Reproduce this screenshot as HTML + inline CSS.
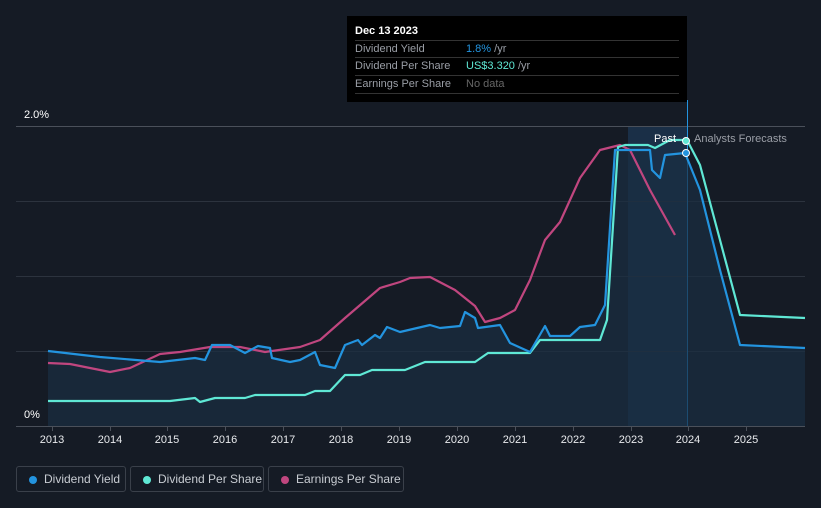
<!DOCTYPE html>
<html><head><style>
body{margin:0;width:821px;height:508px;background:#151b25;font-family:"Liberation Sans",sans-serif;overflow:hidden;position:relative}
.tt{position:absolute;left:347px;top:16px;width:340px;height:86px;background:#000;color:#fff;font-size:11px}
.tt .h{position:absolute;left:8px;top:9px;font-weight:bold}
.row{position:absolute;left:8px;width:324px;border-top:1px solid #333;height:17px;line-height:17px;color:#9a9ea6}
.row span{position:absolute;left:111px}
.leg{position:absolute;top:466px;height:26px;border:1px solid #3a404a;border-radius:3px;color:#c8ccd2;font-size:12px;line-height:24px;box-sizing:border-box;padding-left:27px;white-space:nowrap;overflow:hidden}
.leg i{position:absolute;left:12px;top:9px;width:8px;height:8px;border-radius:50%}
</style></head><body>
<svg width="821" height="508" style="position:absolute;left:0;top:0">
<rect x="628" y="126" width="59" height="300" fill="#1b3550" opacity="0.8"/>
<g stroke="#2c333e" stroke-width="1">
<line x1="16" y1="126.5" x2="805" y2="126.5" stroke="#4a505a"/>
<line x1="16" y1="201.5" x2="805" y2="201.5"/>
<line x1="16" y1="276.5" x2="805" y2="276.5"/>
<line x1="16" y1="351.5" x2="805" y2="351.5"/>
<line x1="16" y1="426.5" x2="805" y2="426.5" stroke="#4a505a"/>
</g>
<line x1="687.5" y1="100" x2="687.5" y2="426" stroke="#2394df" stroke-width="1"/>
<path d="M48,351 L100,357 L160,362 L195,358 L205,360 L212,345 L230,345 L245,353 L258,346 L270,348 L272,358 L290,362 L300,360 L315,352 L320,365 L335,368 L345,345 L358,340 L362,345 L375,335 L380,338 L387,327 L400,332 L430,325 L440,328 L460,326 L465,312 L475,318 L478,328 L500,325 L510,343 L530,352 L545,326 L550,336 L570,336 L580,327 L595,325 L605,305 L615,150 L650,150 L652,170 L660,178 L665,155 L685,153 L700,190 L720,270 L740,345 L805,348 L805,426 L48,426Z" fill="#1a2d42" opacity="0.7"/>
<path d="M48,363 L70,364 L110,372 L130,368 L160,354 L180,352 L210,347 L240,347 L265,352 L300,347 L320,340 L345,318 L380,288 L400,282 L410,278 L430,277 L455,290 L475,306 L485,322 L500,318 L515,310 L530,280 L545,240 L560,222 L580,178 L600,150 L620,145 L630,150 L650,190 L675,235" fill="none" stroke="#c0467f" stroke-width="2.2" stroke-linejoin="round"/>
<path d="M48,401 L170,401 L195,398 L200,402 L215,398 L245,398 L255,395 L305,395 L315,391 L330,391 L345,375 L360,375 L372,370 L405,370 L425,362 L475,362 L488,353 L530,353 L540,340 L600,340 L607,320 L618,147 L625,145 L648,145 L655,148 L670,140 L687,140 L700,165 L720,240 L740,315 L805,318" fill="none" stroke="#5fe8d5" stroke-width="2.2" stroke-linejoin="round"/>
<path d="M48,351 L100,357 L160,362 L195,358 L205,360 L212,345 L230,345 L245,353 L258,346 L270,348 L272,358 L290,362 L300,360 L315,352 L320,365 L335,368 L345,345 L358,340 L362,345 L375,335 L380,338 L387,327 L400,332 L430,325 L440,328 L460,326 L465,312 L475,318 L478,328 L500,325 L510,343 L530,352 L545,326 L550,336 L570,336 L580,327 L595,325 L605,305 L615,150 L650,150 L652,170 L660,178 L665,155 L685,153 L700,190 L720,270 L740,345 L805,348" fill="none" stroke="#2394df" stroke-width="2.2" stroke-linejoin="round"/>
<circle cx="686" cy="141" r="3.5" fill="#5fe8d5" stroke="#fff" stroke-width="1"/>
<circle cx="686" cy="153" r="3.5" fill="#2394df" stroke="#fff" stroke-width="1"/>
<g font-size="11" fill="#fff">
<text x="24" y="118">2.0%</text><text x="24" y="418">0%</text>
<text x="654" y="142">Past</text>
<text x="694" y="142" fill="#9a9ea6">Analysts Forecasts</text>
</g>
<g font-size="11" fill="#e8eaed" text-anchor="middle" stroke="none">
<text x="52" y="443">2013</text><text x="110" y="443">2014</text><text x="167" y="443">2015</text><text x="225" y="443">2016</text><text x="283" y="443">2017</text><text x="341" y="443">2018</text><text x="399" y="443">2019</text><text x="457" y="443">2020</text><text x="515" y="443">2021</text><text x="573" y="443">2022</text><text x="631" y="443">2023</text><text x="688" y="443">2024</text><text x="746" y="443">2025</text>
</g>
<g stroke="#4a505a">
<line x1="52.5" y1="426" x2="52.5" y2="431"/><line x1="110.5" y1="426" x2="110.5" y2="431"/><line x1="167.5" y1="426" x2="167.5" y2="431"/><line x1="225.5" y1="426" x2="225.5" y2="431"/><line x1="283.5" y1="426" x2="283.5" y2="431"/><line x1="341.5" y1="426" x2="341.5" y2="431"/><line x1="399.5" y1="426" x2="399.5" y2="431"/><line x1="457.5" y1="426" x2="457.5" y2="431"/><line x1="515.5" y1="426" x2="515.5" y2="431"/><line x1="573.5" y1="426" x2="573.5" y2="431"/><line x1="631.5" y1="426" x2="631.5" y2="431"/><line x1="688.5" y1="426" x2="688.5" y2="431"/><line x1="746.5" y1="426" x2="746.5" y2="431"/>
</g>
</svg>
<div class="tt"><div class="h">Dec 13 2023</div>
<div class="row" style="top:24px">Dividend Yield<span><b style="font-weight:normal;color:#2394df">1.8%</b> /yr</span></div>
<div class="row" style="top:41px">Dividend Per Share<span><b style="font-weight:normal;color:#5fe8d5">US$3.320</b> /yr</span></div>
<div class="row" style="top:59px;border-bottom:1px solid #333">Earnings Per Share<span style="color:#666">No data</span></div>
</div>
<div class="leg" style="left:16px;width:110px"><i style="background:#2394df"></i>Dividend Yield</div>
<div class="leg" style="left:130px;width:134px"><i style="background:#5fe8d5"></i>Dividend Per Share</div>
<div class="leg" style="left:268px;width:136px"><i style="background:#c0467f"></i>Earnings Per Share</div>
</body></html>
